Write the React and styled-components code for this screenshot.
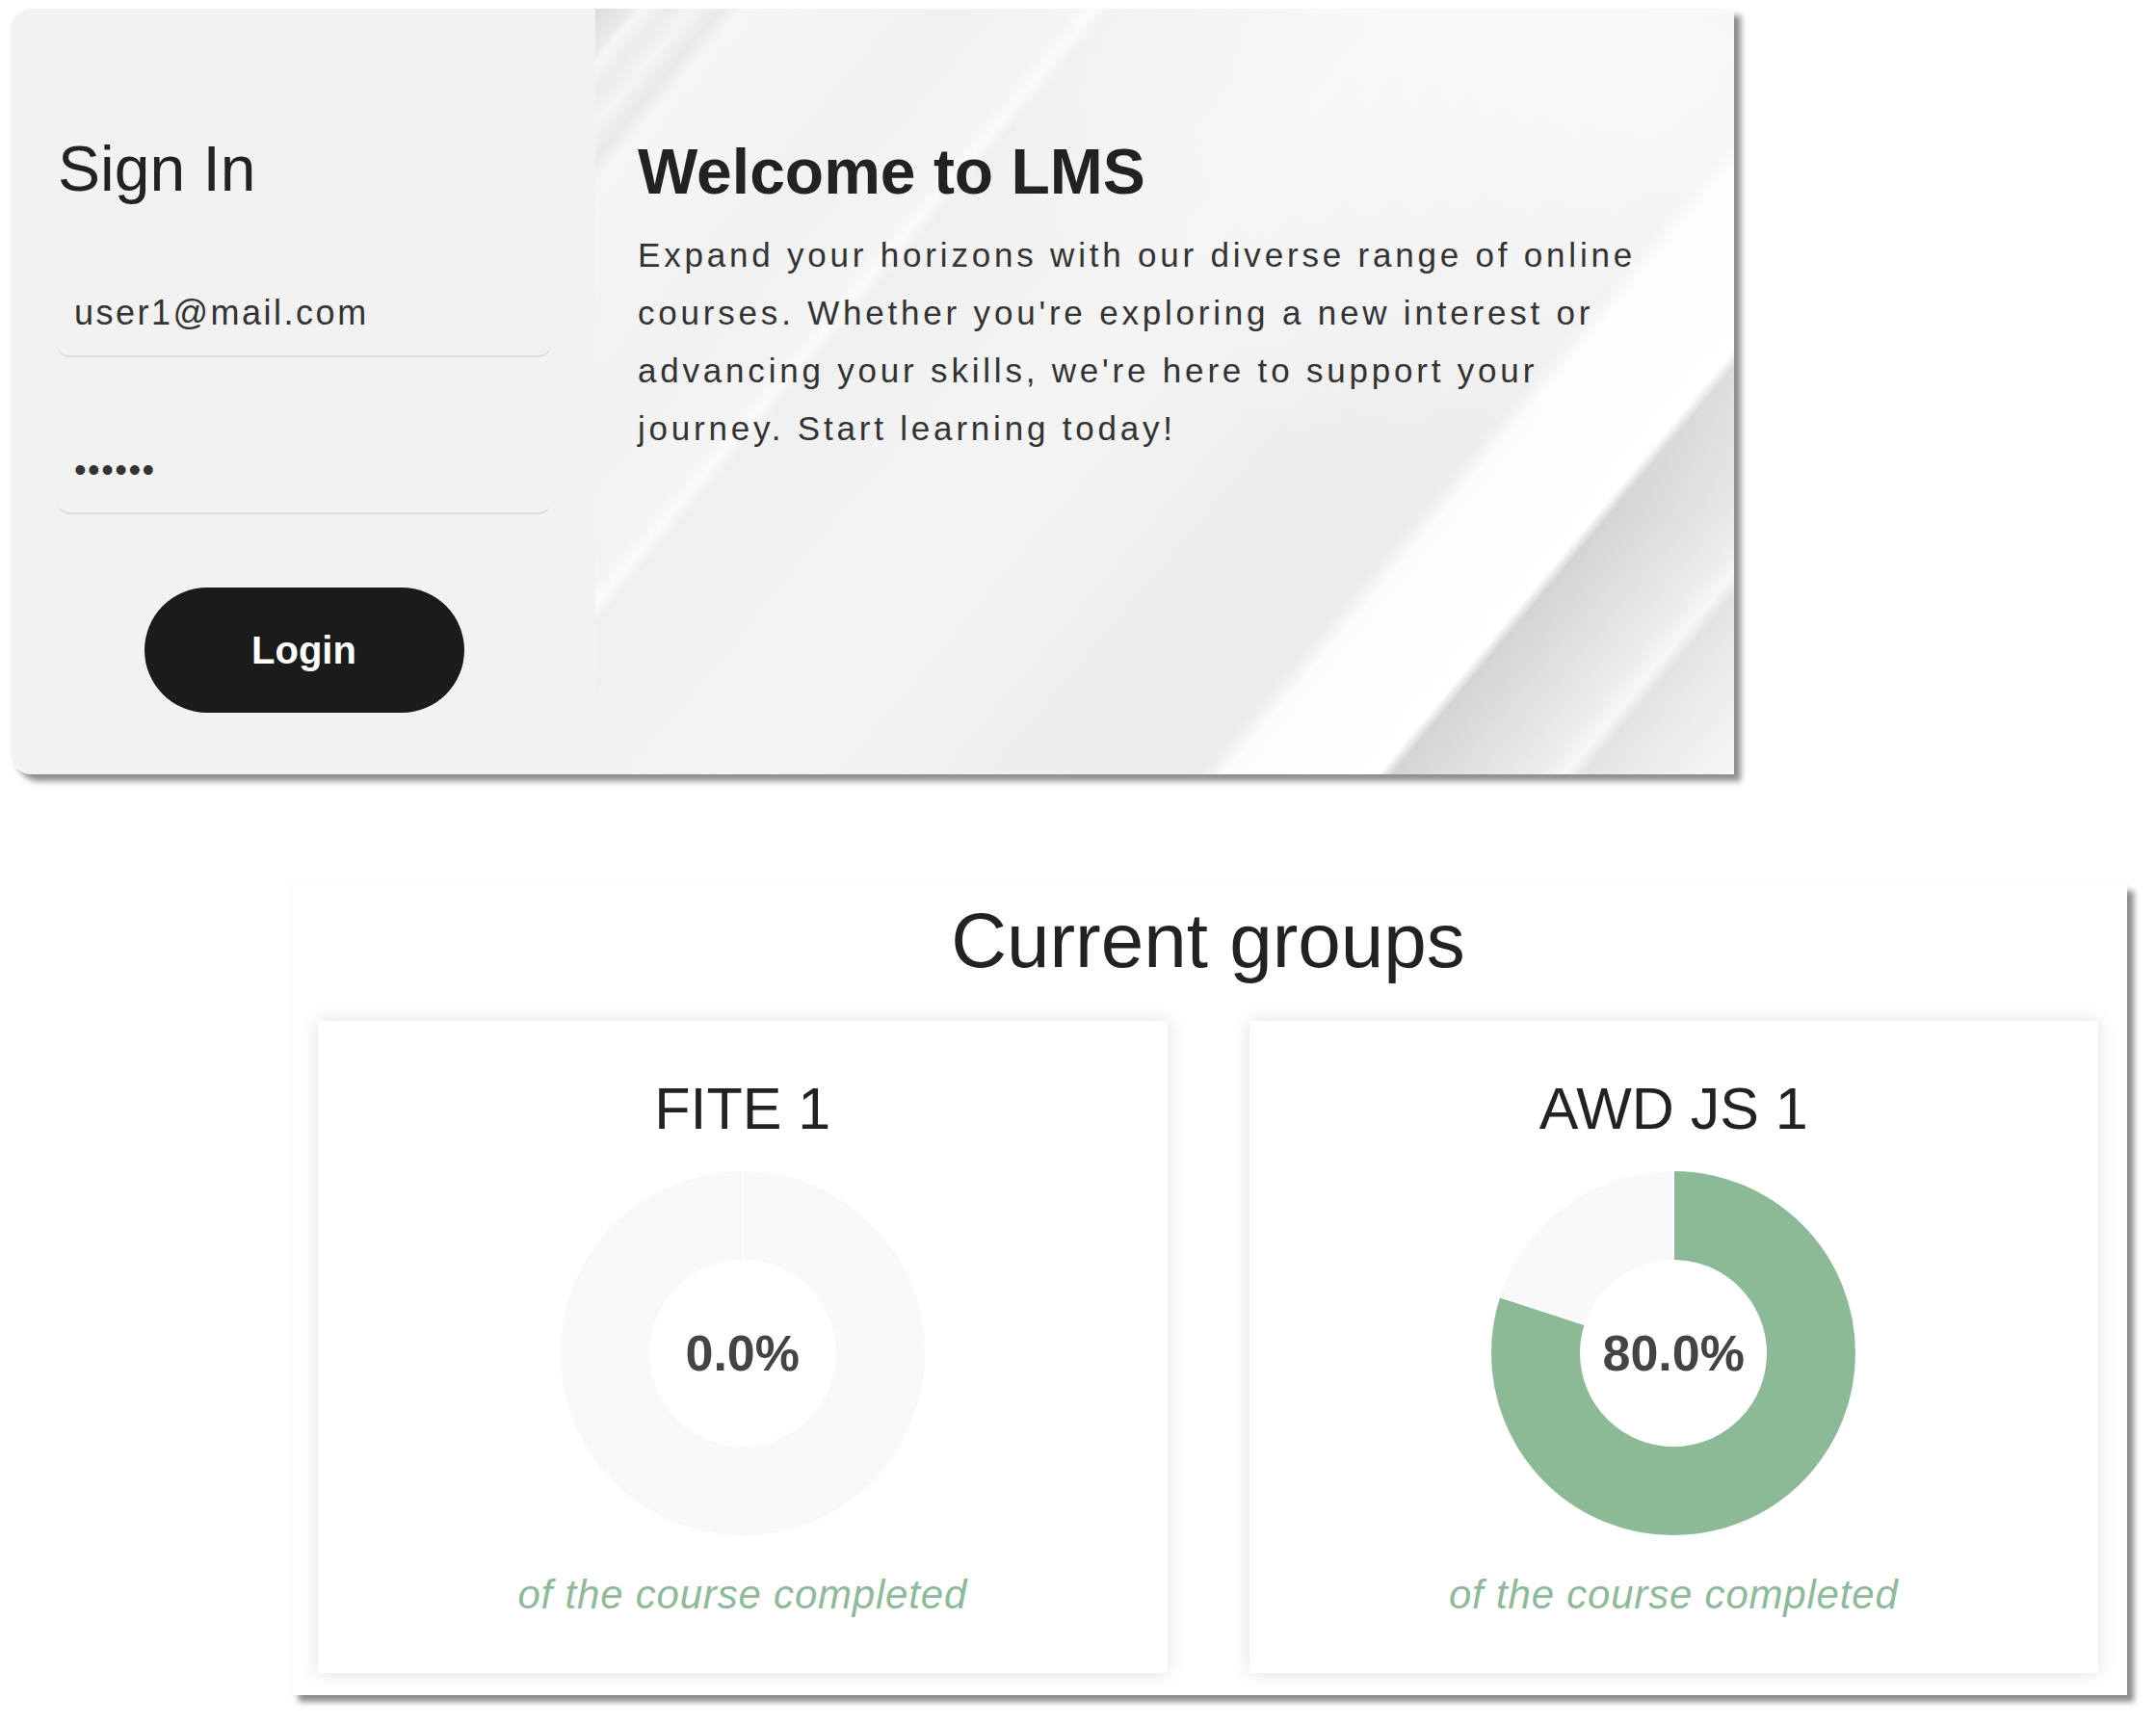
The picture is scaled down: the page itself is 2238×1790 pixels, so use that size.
import React from "react";
import styled, { createGlobalStyle } from "styled-components";

const GlobalStyle = createGlobalStyle`
  body {
    margin: 0;
    background: #ffffff;
    font-family: "Liberation Sans", Arial, sans-serif;
  }
`;

const Page = styled.div`
  display: flex;
  flex-direction: column;
  align-items: flex-start;
  width: 2238px;
  box-sizing: border-box;
  padding: 9px 0 20px 11px;
`;

/* ---------- sign in ---------- */

const LoginCard = styled.section`
  display: grid;
  grid-template-columns: 607px 1fr;
  width: 1789px;
  height: 795px;
  border-radius: 22px 0 0 22px;
  overflow: hidden;
  box-shadow: 7px 7px 6px rgba(0, 0, 0, 0.45);
`;

const SignInPane = styled.div`
  display: flex;
  flex-direction: column;
  padding: 130px 47px 0 49px;
  background: #f2f2f2;
`;

const Heading = styled.h2`
  margin: 0;
  font-size: 66px;
  font-weight: 400;
  line-height: 72px;
  color: #222222;
`;

const Field = styled.input`
  box-sizing: border-box;
  width: 100%;
  height: 90px;
  margin-top: ${(p) => p.$gap}px;
  padding: 0 17px;
  border: none;
  border-bottom: 2px solid #dcdcdc;
  border-radius: 0 0 12px 12px;
  background: transparent;
  font-family: "Liberation Sans", Arial, sans-serif;
  font-size: 36px;
  letter-spacing: ${(p) => (p.type === "password" ? "1.5px" : "2.5px")};
  color: #333333;
  outline: none;
`;

const LoginButton = styled.button`
  align-self: center;
  width: 332px;
  height: 130px;
  margin-top: 76px;
  border: none;
  border-radius: 65px;
  background: #1b1b1b;
  color: #ffffff;
  font-family: "Liberation Sans", Arial, sans-serif;
  font-size: 40px;
  font-weight: 700;
  cursor: pointer;
`;

const WelcomePane = styled.div`
  padding: 131px 78px 0 44px;
  background:
    radial-gradient(ellipse at 92% 8%, rgba(255, 255, 255, 0.7), rgba(255, 255, 255, 0) 45%),
    linear-gradient(
      130deg,
      #dcdcdc 0%,
      #e9e9e9 2%,
      #f7f7f7 2.6%,
      #ebebeb 4%,
      #f5f5f5 5.5%,
      #e8e8e8 7%,
      #f6f6f6 8.2%,
      #f1f1f1 20%,
      #f4f4f4 27%,
      #fbfbfb 28%,
      #f0f0f0 29%,
      #f4f4f4 45%,
      #eeeeee 60%,
      #ececec 70%,
      #fcfcfc 71.4%,
      #ffffff 80%,
      #d4d4d4 80.8%,
      #dedede 84%,
      #ececec 89%,
      #f8f8f8 90.5%,
      #e3e3e3 91.5%,
      #ececec 95%,
      #f6f6f6 100%
    );
`;

const WelcomeTitle = styled.h1`
  margin: 0;
  font-size: 66px;
  font-weight: 700;
  line-height: normal;
  color: #222222;
`;

const Blurb = styled.p`
  margin: 19px 0 0;
  font-size: 35px;
  line-height: 60px;
  letter-spacing: 3.8px;
  color: #333333;
`;

/* ---------- groups ---------- */

const GroupsCard = styled.section`
  width: 1905px;
  margin: 114px 0 0 292px;
  padding: 13px 30px 23px 27px;
  box-sizing: border-box;
  background: #ffffff;
  box-shadow: 0 0 3px rgba(0, 0, 0, 0.08), 7px 7px 6px rgba(0, 0, 0, 0.45);
`;

const GroupsTitle = styled.h2`
  margin: 0;
  font-size: 80px;
  font-weight: 400;
  line-height: normal;
  text-align: center;
  color: #222222;
`;

const GroupGrid = styled.div`
  display: grid;
  grid-template-columns: 1fr 1fr;
  gap: 85px;
  margin-top: 37px;
`;

const GroupCard = styled.article`
  display: flex;
  flex-direction: column;
  align-items: center;
  padding: 56px 0 57px;
  background: #ffffff;
  box-shadow: 0 0 18px rgba(0, 0, 0, 0.13);
`;

const GroupName = styled.h3`
  margin: 0;
  font-size: 61px;
  font-weight: 400;
  line-height: normal;
  color: #222222;
`;

const DonutWrap = styled.div`
  display: grid;
  place-items: center;
  margin-top: 30px;

  & > * {
    grid-area: 1 / 1;
  }
`;

const Percent = styled.span`
  font-size: 52px;
  font-weight: 700;
  color: #444444;
`;

const Caption = styled.p`
  margin: 38px 0 0;
  font-size: 42px;
  font-style: italic;
  line-height: normal;
  letter-spacing: 0.8px;
  color: #8dba98;
`;

function Donut({ percent }) {
  const size = 378;
  const mid = size / 2;
  const r = 143;
  const ring = 92;
  const circ = 2 * Math.PI * r;
  const end = (percent / 100) * 360;

  return (
    <DonutWrap>
      <svg width={size} height={size} viewBox={`0 0 ${size} ${size}`}>
        <circle cx={mid} cy={mid} r={r} fill="none" stroke="#f8f8f8" strokeWidth={ring} />
        {percent > 0 && (
          <circle
            cx={mid}
            cy={mid}
            r={r}
            fill="none"
            stroke="#8cba97"
            strokeWidth={ring}
            strokeDasharray={`${(circ * percent) / 100} ${circ}`}
            transform={`rotate(-90 ${mid} ${mid})`}
          />
        )}
        <line x1={mid} y1={0} x2={mid} y2={mid - r + ring / 2} stroke="#ffffff" strokeWidth="2" />
        {percent > 0 && (
          <line
            x1={mid}
            y1={0}
            x2={mid}
            y2={mid - r + ring / 2}
            stroke="#ffffff"
            strokeWidth="2"
            transform={`rotate(${end} ${mid} ${mid})`}
          />
        )}
      </svg>
      <Percent>{percent.toFixed(1)}%</Percent>
    </DonutWrap>
  );
}

const groups = [
  { name: "FITE 1", percent: 0 },
  { name: "AWD JS 1", percent: 80 },
];

export default function App() {
  return (
    <>
      <GlobalStyle />
      <Page>
        <LoginCard>
          <SignInPane>
            <Heading>Sign In</Heading>
            <Field type="email" $gap={70} defaultValue="user1@mail.com" />
            <Field type="password" $gap={73} defaultValue="123456" />
            <LoginButton>Login</LoginButton>
          </SignInPane>
          <WelcomePane>
            <WelcomeTitle>Welcome to LMS</WelcomeTitle>
            <Blurb>
              Expand your horizons with our diverse range of online courses. Whether you're
              exploring a new interest or advancing your skills, we're here to support your
              journey. Start learning today!
            </Blurb>
          </WelcomePane>
        </LoginCard>

        <GroupsCard>
          <GroupsTitle>Current groups</GroupsTitle>
          <GroupGrid>
            {groups.map((g) => (
              <GroupCard key={g.name}>
                <GroupName>{g.name}</GroupName>
                <Donut percent={g.percent} />
                <Caption>of the course completed</Caption>
              </GroupCard>
            ))}
          </GroupGrid>
        </GroupsCard>
      </Page>
    </>
  );
}
